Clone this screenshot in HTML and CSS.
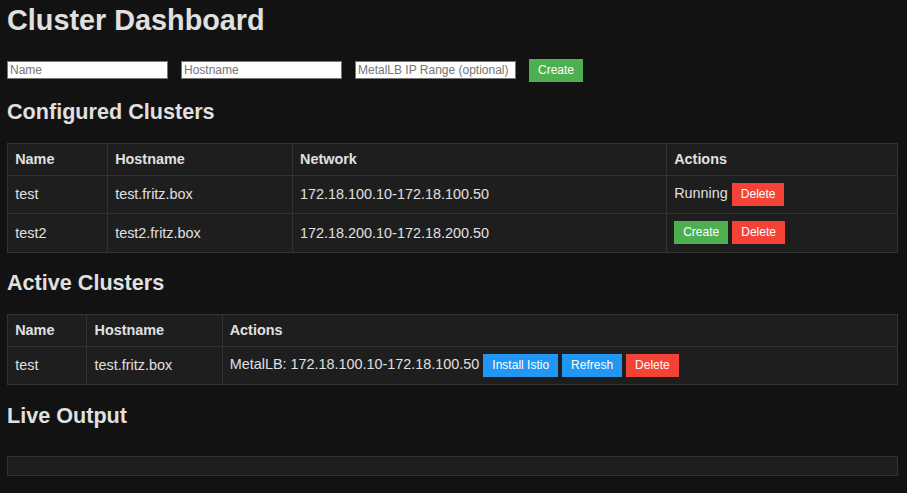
FILE: index.html
```html
<!DOCTYPE html>
<html>
<head>
<meta charset="utf-8">
<title>Cluster Dashboard</title>
<link rel="stylesheet" href="styles.css">
</head>
<body>
<h1 class="title">Cluster Dashboard</h1>
<form class="create-form">
  <input class="field" type="text" placeholder="Name">
  <input class="field" type="text" placeholder="Hostname">
  <input class="field" type="text" placeholder="MetalLB IP Range (optional)">
  <button type="button" class="btn btn-green">Create</button>
</form>

<h2 class="section">Configured Clusters</h2>
<table class="grid">
  <thead>
    <tr><th>Name</th><th>Hostname</th><th>Network</th><th>Actions</th></tr>
  </thead>
  <tbody>
    <tr>
      <td>test</td><td>test.fritz.box</td><td>172.18.100.10-172.18.100.50</td>
      <td>Running <button class="btn btn-red">Delete</button></td>
    </tr>
    <tr>
      <td>test2</td><td>test2.fritz.box</td><td>172.18.200.10-172.18.200.50</td>
      <td><button class="btn btn-green">Create</button> <button class="btn btn-red">Delete</button></td>
    </tr>
  </tbody>
</table>

<h2 class="section">Active Clusters</h2>
<table class="grid">
  <thead>
    <tr><th>Name</th><th>Hostname</th><th>Actions</th></tr>
  </thead>
  <tbody>
    <tr>
      <td>test</td><td>test.fritz.box</td>
      <td>MetalLB: 172.18.100.10-172.18.100.50 <button class="btn btn-blue">Install Istio</button> <button class="btn btn-blue">Refresh</button> <button class="btn btn-red">Delete</button></td>
    </tr>
  </tbody>
</table>

<h2 class="section section-output">Live Output</h2>
<pre class="output"></pre>
</body>
</html>
```

FILE: styles.css
```css
html, body {
  background: #121212;
}
body {
  margin: 0;
  padding: 4px 9px 0 7px;
  color: #e0e0e0;
  font-family: "Liberation Sans", Arial, sans-serif;
  font-size: 14.4px;
}
.title {
  font-size: 28.8px;
  font-weight: bold;
  margin: 0 0 22px 0;
  line-height: 33px;
}
.create-form {
  display: flex;
  align-items: flex-start;
  gap: 13.5px;
  margin: 0;
  height: 23px;
}
.field {
  box-sizing: border-box;
  width: 160.5px;
  height: 18px;
  margin: 2px 0 0 0;
  padding: 1px 2px;
  border: 1px solid #767676;
  background: #fff;
  color: #000;
  font-family: "Liberation Sans", Arial, sans-serif;
  font-size: 12px;
}
.field::placeholder {
  color: #757575;
}
.section {
  font-size: 21.6px;
  font-weight: bold;
  line-height: 25px;
  margin: 17px 0 19px 0;
}
.section-output {
  margin-top: 18px;
}
.btn {
  border: none;
  padding: 0 9px;
  height: 23px;
  line-height: 23px;
  font-family: "Liberation Sans", Arial, sans-serif;
  font-size: 12px;
  color: #fff;
  cursor: pointer;
  vertical-align: middle;
}
.btn-green { background: #4caf50; }
.btn-red { background: #f44336; }
.btn-blue { background: #2196f3; }
.grid {
  width: 100%;
  border-collapse: collapse;
  background: #1e1e1e;
}
.grid th, .grid td {
  border: 1px solid #333;
  padding: 7.2px;
  text-align: left;
  line-height: 16.5px;
}
.grid th {
  font-weight: bold;
}
.grid td {
  height: 23px;
}
.output {
  box-sizing: border-box;
  margin: 28px 0 0 0;
  height: 20px;
  background: #1e1e1e;
  border: 1px solid #333;
}
```
